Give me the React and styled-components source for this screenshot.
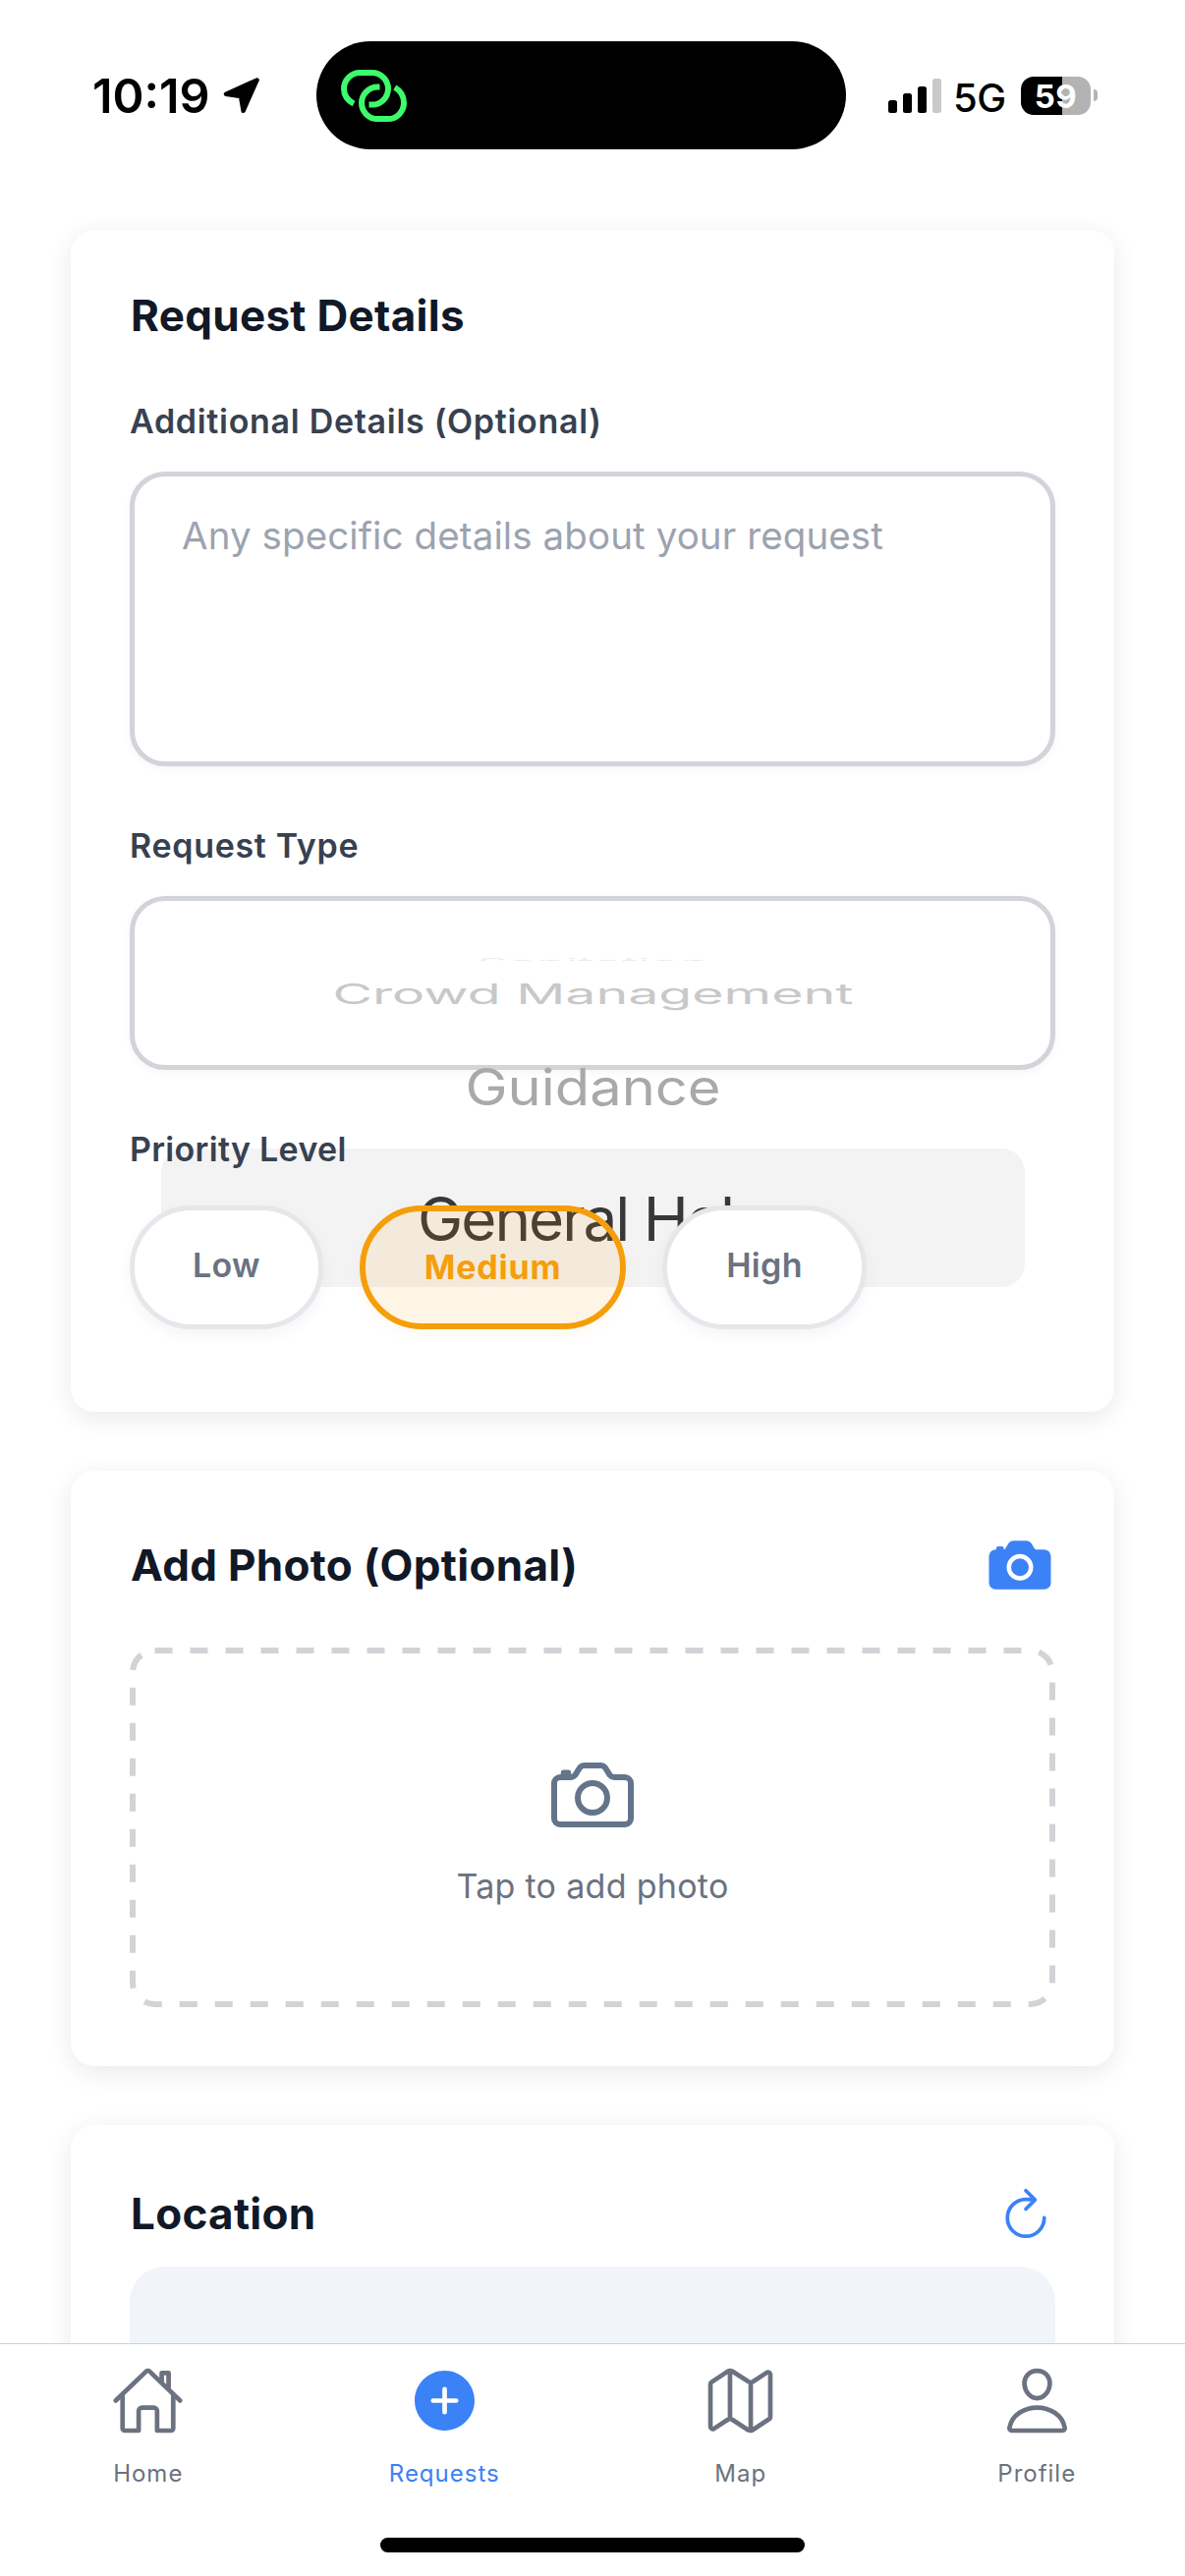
import React from 'react';
import styled, { createGlobalStyle, css } from 'styled-components';
import {
  IoCamera,
  IoCameraOutline,
  IoRefreshOutline,
  IoHomeOutline,
  IoAddCircle,
  IoMapOutline,
  IoPersonOutline,
} from 'react-icons/io5';

const GlobalStyle = createGlobalStyle`
  *, *::before, *::after { box-sizing: border-box; }
  body {
    margin: 0;
    background: #fff;
    font-family: Inter, "Liberation Sans", sans-serif;
  }
  svg { display: block; flex: none; }
  button { font-family: inherit; margin: 0; padding: 0; background: none; border: 0; }
`;

const Screen = styled.div`
  width: 1206px;
  height: 2622px;
  display: flex;
  flex-direction: column;
  overflow: hidden;
  background: #fff;
`;

/* ---------- status bar ---------- */

const StatusBar = styled.header`
  flex: none;
  height: 194px;
  display: grid;
  grid-template-columns: 322px 539px 345px;
  align-items: center;
`;

const StatusLeft = styled.div`
  display: flex;
  align-items: center;
  padding-left: 94px;
`;

const Time = styled.span`
  width: 133px;
  padding-top: 2px;
  font-size: 48.5px;
  line-height: 58px;
  font-weight: 600;
  letter-spacing: 0;
  color: #000;
`;

const Island = styled.div`
  height: 110px;
  border-radius: 55px;
  background: #000;
  display: flex;
  align-items: center;
  padding-left: 25px;
`;

const StatusRight = styled.div`
  display: flex;
  align-items: center;
  padding-left: 43px;
`;

const Network = styled.span`
  width: 69px;
  margin-left: 11px;
  padding-top: 5px;
  font-size: 40px;
  line-height: 48px;
  font-weight: 500;
  letter-spacing: -0.5px;
  color: #000;
`;

const Battery = styled.div`
  width: 71px;
  height: 39px;
  border-radius: 13px;
  background: linear-gradient(to right, #000 42px, #b3b3b3 42px);
  color: #fff;
  font-size: 33px;
  line-height: 40px;
  font-weight: 700;
  letter-spacing: 0.6px;
  text-align: center;
`;

const BatteryCap = styled.div`
  width: 4px;
  height: 12px;
  margin-left: 3px;
  border-radius: 0 6px 6px 0;
  background: #b3b3b3;
`;

/* ---------- content ---------- */

const Content = styled.main`
  flex: 1;
  min-height: 0;
  overflow: hidden;
  padding: 40px 72px 0;
  display: flex;
  flex-direction: column;
  gap: 60px;
`;

const Card = styled.section`
  flex: none;
  padding: 60px 60px ${(p) => p.$bottom || 60}px;
  border-radius: 24px;
  background: #fff;
  box-shadow: 0 6px 26px rgba(0, 0, 0, 0.09);
`;

const Title = styled.h2`
  margin: 0;
  padding-left: 1px;
  font-size: 44px;
  line-height: 55px;
  font-weight: 700;
  letter-spacing: 0.3px;
  color: #111827;
`;

const CardHeader = styled.div`
  height: ${(p) => p.$height}px;
  display: flex;
  align-items: center;
  justify-content: space-between;
  color: #3b82f6;
  margin-bottom: ${(p) => p.$gap}px;
`;

const FieldLabel = styled.label`
  display: block;
  margin-top: ${(p) => p.$top || 61}px;
  font-size: 34px;
  line-height: 40px;
  font-weight: 600;
  letter-spacing: ${(p) => p.$tracking || 0.7}px;
  color: #374151;
  position: relative;
  z-index: 1;
`;

const field = css`
  border: 5px solid #d1d4d9;
  border-radius: 36px;
  background: #fff;
  box-shadow: 0 3px 9px rgba(0, 0, 0, 0.04);
`;

const TextArea = styled.div`
  ${field}
  height: 300px;
  margin-top: 31px;
  padding: 36px 48px;
  font-size: 38.5px;
  line-height: 48px;
  letter-spacing: 0.1px;
  color: #9ca3af;
`;

const Picker = styled.div`
  ${field}
  position: relative;
  height: 177px;
  margin-top: 31px;
`;

const Wheel = styled.div`
  position: absolute;
  top: 55px;
  left: 27px;
  width: 879px;
  display: flex;
  flex-direction: column;
  font-size: 60px;
  text-align: center;
  white-space: nowrap;
`;

const WheelItem = styled.div`
  height: ${(p) => p.$height}px;
  line-height: ${(p) => p.$height}px;
  margin-top: ${(p) => p.$top || 0}px;
  color: ${(p) => p.$color};
  transform: scale(${(p) => p.$sx}, ${(p) => p.$sy});
`;

const WheelEdge = styled.div`
  height: 3px;
  margin: 3px 0 5px;
  overflow: hidden;
  line-height: 48px;
  color: #ececec;

  span {
    display: block;
    transform: scale(0.84, 0.2);
    transform-origin: top;
  }
`;

const WheelSelected = styled.div`
  height: 141px;
  padding-top: 1px;
  border-radius: 24px;
  background: rgba(0, 0, 0, 0.047);
  color: #383838;
  font-size: 62px;
  line-height: 141px;
  letter-spacing: -2px;
`;

const Priorities = styled.div`
  position: relative;
  z-index: 1;
  display: flex;
  gap: 37px;
  margin-top: 37px;
`;

const Pill = styled.button`
  width: ${(p) => p.$width}px;
  height: 126px;
  border-radius: 63px;
  border: 5px solid #e5e7eb;
  background: #fff;
  box-shadow: 0 6px 14px rgba(60, 60, 110, 0.05);
  padding-bottom: 4px;
  font-size: 34px;
  line-height: 40px;
  font-weight: 600;
  letter-spacing: 0.3px;
  color: #6b7280;

  ${(p) =>
    p.$active &&
    css`
      border: 6px solid #f59e0b;
      background: rgba(245, 158, 11, 0.1);
      box-shadow: 0 6px 14px rgba(245, 158, 11, 0.06);
      padding-bottom: 0;
      font-weight: 700;
      letter-spacing: 0.8px;
      color: #f59e0b;
    `}
`;

const PhotoDrop = styled.div`
  position: relative;
  height: 366px;
  padding-top: 102px;
  display: flex;
  flex-direction: column;
  align-items: center;
  color: #64748b;
`;

const DashedOutline = styled.svg`
  position: absolute;
  inset: 0;
`;

const PhotoHint = styled.span`
  margin-top: 23px;
  font-size: 34px;
  line-height: 44px;
  letter-spacing: 0.3px;
  color: #6b7280;
`;

const RefreshButton = styled.button`
  width: 60px;
  color: inherit;
`;

const MapPreview = styled.div`
  height: 480px;
  border-radius: 36px;
  background: #f1f4f9;
`;

/* ---------- tab bar ---------- */

const TabBar = styled.nav`
  flex: none;
  height: 237px;
  padding-top: 20px;
  border-top: 1px solid #cfd1d3;
  background: #fff;
`;

const Tabs = styled.div`
  display: grid;
  grid-template-columns: repeat(4, 1fr);
`;

const Tab = styled.div`
  display: flex;
  flex-direction: column;
  align-items: center;
  gap: 22px;
  font-size: 24px;
  line-height: 30px;
  letter-spacing: 1px;
  color: ${(p) => (p.$active ? '#3b82f6' : '#6b7280')};
`;

const HomeIndicator = styled.div`
  width: 432px;
  height: 15px;
  margin: 50px auto 0;
  border-radius: 8px;
  background: #000;
`;

const LocationArrow = () => (
  <svg width="38" height="38" viewBox="0 0 38 38">
    <path
      d="M34.6 3.4 L3 17.8 L18 20 L20.6 34.8 Z"
      fill="#000"
      stroke="#000"
      strokeWidth="4.4"
      strokeLinejoin="round"
    />
  </svg>
);

const LinkRings = () => (
  <svg width="67" height="53" viewBox="0 0 67 53" fill="none" stroke="#3dfb6c" strokeWidth="6">
    <path d="M13 34.6 C7 31.4 3 26 3 19.3 A16.3 16.3 0 0 1 19.3 3 H31.7 A16.3 16.3 0 0 1 48 19.3 A16.3 16.3 0 0 1 31.7 35.6 H28.5" />
    <path d="M39.5 17.6 H37.3 A16.2 16.2 0 0 0 21 33.8 A16.2 16.2 0 0 0 37.2 50 H47.8 A16.2 16.2 0 0 0 64 33.8 C64 27 60.8 21.4 54.8 18" />
  </svg>
);

const SignalBars = () => (
  <svg width="55" height="35" viewBox="0 0 55 35">
    <rect x="0" y="22" width="9" height="13" rx="2.5" />
    <rect x="15" y="15" width="9" height="20" rx="2.5" />
    <rect x="30" y="8" width="9" height="27" rx="2.5" />
    <rect x="45" y="0" width="9" height="35" rx="2.5" fill="#c9c9c9" />
  </svg>
);

const priorities = [
  { name: 'Low', width: 197 },
  { name: 'Medium', width: 271, active: true },
  { name: 'High', width: 208 },
];

const tabs = [
  { name: 'Home', Icon: IoHomeOutline },
  { name: 'Requests', Icon: IoAddCircle, active: true },
  { name: 'Map', Icon: IoMapOutline },
  { name: 'Profile', Icon: IoPersonOutline },
];

export default function App() {
  return (
    <Screen>
      <GlobalStyle />
      <StatusBar>
        <StatusLeft>
          <Time>10:19</Time>
          <LocationArrow />
        </StatusLeft>
        <Island>
          <LinkRings />
        </Island>
        <StatusRight>
          <SignalBars />
          <Network>5G</Network>
          <Battery>59</Battery>
          <BatteryCap />
        </StatusRight>
      </StatusBar>

      <Content>
        <Card $bottom={84}>
          <Title>Request Details</Title>
          <FieldLabel $top={60}>Additional Details (Optional)</FieldLabel>
          <TextArea>Any specific details about your request</TextArea>
          <FieldLabel>Request Type</FieldLabel>
          <Picker>
            <Wheel>
              <WheelEdge>
                <span>Sanitation</span>
              </WheelEdge>
              <WheelItem $height={56} $color="#c8c8c8" $sx={0.924} $sy={0.48}>
                Crowd Management
              </WheelItem>
              <WheelItem $height={126} $top={4} $color="#a9a9a9" $sx={0.964} $sy={0.86}>
                Guidance
              </WheelItem>
              <WheelSelected>General Help</WheelSelected>
            </Wheel>
          </Picker>
          <FieldLabel $tracking={0.3}>Priority Level</FieldLabel>
          <Priorities>
            {priorities.map((p) => (
              <Pill key={p.name} $width={p.width} $active={p.active}>
                {p.name}
              </Pill>
            ))}
          </Priorities>
        </Card>

        <Card>
          <CardHeader $height={72} $gap={48}>
            <Title>Add Photo (Optional)</Title>
            <IoCamera size={72} />
          </CardHeader>
          <PhotoDrop>
            <DashedOutline width="942" height="366" viewBox="0 0 942 366">
              <rect
                x="3"
                y="3"
                width="936"
                height="360"
                rx="22.5"
                fill="none"
                stroke="#d1d3d7"
                strokeWidth="6"
                strokeDasharray="18 18"
              />
            </DashedOutline>
            <IoCameraOutline size={96} />
            <PhotoHint>Tap to add photo</PhotoHint>
          </PhotoDrop>
        </Card>

        <Card>
          <CardHeader $height={60} $gap={24}>
            <Title>Location</Title>
            <RefreshButton aria-label="Refresh">
              <IoRefreshOutline size={60} />
            </RefreshButton>
          </CardHeader>
          <MapPreview />
        </Card>
      </Content>

      <TabBar>
        <Tabs>
          {tabs.map(({ name, Icon, active }) => (
            <Tab key={name} $active={active}>
              <Icon size={75} />
              <span>{name}</span>
            </Tab>
          ))}
        </Tabs>
        <HomeIndicator />
      </TabBar>
    </Screen>
  );
}
